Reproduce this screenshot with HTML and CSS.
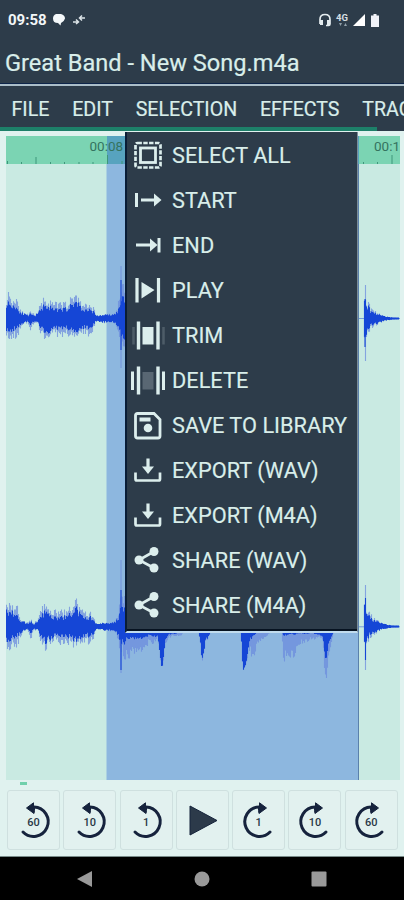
FILE: index.html
```
<!DOCTYPE html>
<html lang="en">
<head>
<meta charset="utf-8">
<title>Great Band - New Song.m4a</title>
<link rel="stylesheet" href="styles.css">
</head>
<body>
<svg class="defs" width="0" height="0" aria-hidden="true">
  <defs>
    <symbol id="export" viewBox="0 0 30 30"><path d="M2.500 16.500V23q0 1.500 1.500 1.500h21.500q1.500 0 1.500-1.500v-6.500" fill="none" stroke="currentColor" stroke-width="2.700"/><path d="M15 2.500v9" stroke="currentColor" stroke-width="3.200"/><path d="M9 10.500h12L15 18z" fill="currentColor"/></symbol>
    <symbol id="share" viewBox="0 0 30 30"><path d="M21 5.500L6 14l15 8" fill="none" stroke="currentColor" stroke-width="2.600"/><g fill="currentColor"><circle cx="21" cy="5.500" r="4.500"/><circle cx="6" cy="14" r="4.500"/><circle cx="21" cy="22" r="4.500"/></g></symbol>
    <symbol id="back" viewBox="0 0 40 44"><path d="M20 9A14.700 14.700 0 1 1 9 34" fill="none" stroke="currentColor" stroke-width="3" stroke-linecap="round"/><path d="M12.500 10L19.500 4.800v3.200l1 .5v4l-.5 3z" fill="currentColor" stroke="currentColor" stroke-linejoin="round"/></symbol>
    <symbol id="ahead" viewBox="0 0 40 44"><path d="M20 9A14.700 14.700 0 1 0 31 34" fill="none" stroke="currentColor" stroke-width="3" stroke-linecap="round"/><path d="M27.500 10L20.500 4.800v3.200l-1 .5v4l.5 3z" fill="currentColor" stroke="currentColor" stroke-linejoin="round"/></symbol>
  </defs>
</svg>
<div class="phone">
  <header class="status">
    <span class="clock">09:58</span>
    <svg class="st-chat" width="14" height="14" viewBox="0 0 14 14"><path d="M4 1h5q4 1 4 4.500Q12 9 9 10l-.5 2.500L6 10Q1 10 1 5.500 1 2 4 1z" fill="#f4f8fa"/></svg>
    <svg class="st-link" width="14" height="12" viewBox="0 0 14 12"><path d="M1 8h5M4 5.500L6.500 8 4 10M13 4H8M10 1.500L7.500 4 10 6.500" fill="none" stroke="#dce4e8" stroke-width="1.500"/></svg>
    <span class="spacer"></span>
    <svg width="14" height="14" viewBox="0 0 14 14"><path d="M2 11V6.500Q2 1.500 7 1.500t5 5V11q0 1.500-1.500 1.500H8" fill="none" stroke="#e4ecef" stroke-width="1.700"/><path d="M2 7h3v5H2zM9 7h3v5H9z" fill="#e4ecef"/></svg>
    <span class="net"><b>4G</b><svg width="8" height="4" viewBox="0 0 8 4"><path d="M0 0h3L1.500 3zM5 3h3L6.500 0z" fill="#91a0aa"/></svg></span>
    <svg width="12" height="12" viewBox="0 0 12 12"><path d="M0 12L12 0v12z" fill="#fff"/></svg>
    <svg class="st-bat" width="8" height="13" viewBox="0 0 8 13"><path d="M2.500 0h3v1.500H8V13H0V1.500h2.500z" fill="#f0f2f8"/></svg>
  </header>
  <h1>Great Band - New Song.m4a</h1>
  <nav class="tabs"><span>FILE</span><span>EDIT</span><span>SELECTION</span><span>EFFECTS</span><span>TRACK</span></nav>
  <div class="scroll"></div>
  <main class="editor">
    <div class="ruler">
      <span class="time first">00:08</span><span class="time last">00:1</span>
      <svg width="394" height="28" viewBox="6 136 394 28"><path d="M7.500 161v3M21.500 162v2M36 157v7M50.500 162v2M64.500 162v2M79 162v2M93 162v2M107.500 155v9M122 161v3M363.500 162v2M377.500 162v2M392 155v9" stroke="#3f967b"/></svg>
    </div>
    <svg class="waves" width="394" height="616" viewBox="6 164 394 616">
      <path d="M106.500 164h252v616h-252z" fill="#8db7df"/>
      <path d="M358.500 164v616" stroke="#5b81ac"/>
      <path d="M359 318.500h41M359 626.800h41" stroke="#789dda"/>
      <g id="tracks"></g>
    </svg>
    <i class="marker"></i>
  </main>
  <footer class="transport">
    <button><svg viewBox="0 0 40 44"><use href="#back"/></svg><b>60</b></button>
    <button><svg viewBox="0 0 40 44"><use href="#back"/></svg><b>10</b></button>
    <button><svg viewBox="0 0 40 44"><use href="#back"/></svg><b>1</b></button>
    <button><svg viewBox="0 0 40 44"><path d="M8 8l27 14.500L8 37z" fill="#2c3a4a" stroke="#15233a"/></svg></button>
    <button><svg viewBox="0 0 40 44"><use href="#ahead"/></svg><b>1</b></button>
    <button><svg viewBox="0 0 40 44"><use href="#ahead"/></svg><b>10</b></button>
    <button><svg viewBox="0 0 40 44"><use href="#ahead"/></svg><b>60</b></button>
  </footer>
  <div class="navbar">
    <svg viewBox="0 0 18 18"><path d="M16 1v16L1 9z"/></svg>
    <svg viewBox="0 0 18 18"><circle cx="9" cy="9" r="7.500"/></svg>
    <svg viewBox="0 0 18 18"><rect x="1.500" y="1.500" width="15" height="15" rx="1"/></svg>
  </div>
  <ul class="menu">
    <li><svg viewBox="0 0 36 30"><rect x="5.500" y="2" width="25" height="24.500" rx="2" fill="none" stroke="currentColor" stroke-width="2.700" stroke-dasharray="4.400 1.400"/><rect x="10.500" y="7" width="15" height="14.500" fill="none" stroke="currentColor" stroke-width="2.800"/></svg>SELECT ALL</li>
    <li><svg viewBox="0 0 36 30"><path d="M6.500 7v14M11 14h14" stroke="currentColor" stroke-width="3"/><path d="M24 7.500l7.500 6.500-7.500 6.500z" fill="currentColor"/></svg>START</li>
    <li><svg viewBox="0 0 36 30"><path d="M29 7v14.500M6 14h15" stroke="currentColor" stroke-width="3"/><path d="M20 7.500l7.500 6.500-7.500 6.500z" fill="currentColor"/></svg>END</li>
    <li><svg viewBox="0 0 36 30"><path d="M7 2v24.500M28.500 2v24.500" stroke="currentColor" stroke-width="3.200"/><path d="M11.500 6v16.500L24.500 14z" fill="currentColor"/></svg>PLAY</li>
    <li><svg viewBox="0 0 36 30"><path d="M8.500 .5v28M28 .5v28" stroke="currentColor" stroke-width="3.400"/><path d="M12.500 6h11v17.500h-11z" fill="currentColor"/><path d="M3.500 6v17.500M33.500 6v17.500" stroke="#4d5c68" stroke-width="2.500"/></svg>TRIM</li>
    <li><svg viewBox="0 0 36 30"><path d="M8.500 .5v28M28 .5v28" stroke="currentColor" stroke-width="3.400"/><path d="M12.500 6h11v17.500h-11z" fill="#596773"/><path d="M2.500 5.500v18.500M33.500 5.500v18.500" stroke="currentColor" stroke-width="3"/></svg>DELETE</li>
    <li><svg viewBox="0 0 36 30"><path d="M7.500 2.500H24l6 6V25q0 2-2 2H7.500q-2 0-2-2V4.500q0-2 2-2z" fill="none" stroke="currentColor" stroke-width="2.800"/><path d="M9.500 6.500h11v4h-11z" fill="currentColor"/><circle cx="18" cy="17" r="4.300" fill="currentColor"/></svg>SAVE TO LIBRARY</li>
    <li><svg viewBox="-3 0 36 30"><use href="#export" width="30" height="30"/></svg>EXPORT (WAV)</li>
    <li><svg viewBox="-3 0 36 30"><use href="#export" width="30" height="30"/></svg>EXPORT (M4A)</li>
    <li><svg viewBox="-3 0 36 30"><use href="#share" width="30" height="30"/></svg>SHARE (WAV)</li>
    <li><svg viewBox="-3 0 36 30"><use href="#share" width="30" height="30"/></svg>SHARE (M4A)</li>
  </ul>
</div>
<script src="waves.js"></script>
</body>
</html>
```

FILE: styles.css
```
* { box-sizing: border-box; }
body { margin: 0; font-family: Roboto, sans-serif; background: #2d3b49; }
svg { display: block; flex: none; }
.defs { position: absolute; }
.phone { position: relative; width: 404px; height: 900px; overflow: hidden; display: flex; flex-direction: column; background: #2d3c4a; color: #d9eeea; }
.status { height: 40px; display: flex; align-items: center; padding: 0 25px 0 8px; }
.clock { font-size: 15px; font-weight: 700; color: #f2f7f8; width: 44px; white-space: nowrap; }
.st-link { margin-left: 6px; }
.spacer { flex: 1; }
.net { width: 13px; margin: 0 4px 0 4px; height: 15px; font-size: 9.500px; line-height: 10px; color: #d5dfe3; }
.net svg { margin-left: 3px; }
.st-bat { margin-left: 6px; }
h1 { margin: 0; height: 44px; padding-left: 5px; font-size: 23.600px; line-height: 46px; font-weight: 400; white-space: nowrap; -webkit-text-stroke: .2px; }
.tabs { height: 43px; border-top: 2px solid #aabdc8; box-shadow: 0 -1px #0d2448; display: flex; gap: 22.800px; padding-left: 11.500px; font-size: 19.600px; line-height: 48px; white-space: nowrap; overflow: hidden; -webkit-text-stroke: .2px; }
.scroll { height: 4px; width: 377px; background: #1d8069; }
.editor { height: 655px; padding: 5px 4px 0 6px; background: #e0f2ef; }
.ruler { height: 28px; position: relative; overflow: hidden; background: linear-gradient(90deg, #7bd4b3 101px, #57a3bf 101px, #57a3bf 353px, #7bd4b3 353px); }
.time { position: absolute; top: 2px; font-size: 13.500px; line-height: 17px; color: #34735f; }
.time.first { left: 83.500px; }
.time.last { left: 368px; }
.ruler svg { position: absolute; left: 0; top: 0; }
.waves { background: #c9eae2; }
.marker { display: block; width: 7px; height: 3px; margin: 2px 0 0 14px; background: #70d0ac; }
.transport { height: 71px; padding: 4px 7px 7px; display: grid; grid-template-columns: repeat(7, 53px); gap: 3.300px; background: #e0f2ef; border-bottom: 1px solid #788b89; }
.transport button { position: relative; height: 60px; padding: 0; border: 1px solid #cfe0df; border-radius: 3px; background: #e2f1ef; display: grid; place-items: center; color: #16233d; font-family: inherit; }
.transport svg { width: 40px; height: 44px; }
.transport b { position: absolute; inset: 2px 0 0; line-height: 60px; text-align: center; font-size: 11px; font-weight: 500; color: #293746; }
.navbar { height: 43px; background: #000; display: flex; align-items: center; padding-left: 76px; gap: 99px; }
.navbar svg { width: 18px; height: 18px; fill: #999; }
.menu { position: absolute; left: 125px; top: 132px; width: 233px; height: 501px; margin: 0; padding: 1px 0 0; list-style: none; background: #2d3c4a; border-left: 2px solid #0a1d36; border-right: 1px solid #7b8c98; border-bottom: 2px solid #c1dcee; box-shadow: inset 0 -2px #071321; }
.menu li { height: 45px; display: flex; align-items: center; gap: 6px; padding-left: 3px; font-size: 21.750px; white-space: nowrap; -webkit-text-stroke: .15px; }
.menu svg { width: 36px; height: 30px; color: #dceeed; }
```

FILE: waves.js
```
// Envelope points: [x, peak above, peak below, core above, core below]
const intro = [
  [6, 20, 18, 16, 13], [9, 24, 23, 14, 14], [13, 17, 17, 13, 11], [17, 20, 20, 10, 9],
  [20, 10, 10, 6, 6], [24, 4, 5, 4, 4], [28, 4, 4, 2, 2], [31, 6, 12, 4, 6], [34, 4, 4, 2, 2],
  [38, 5, 4, 4, 3], [41, 16, 15, 9, 9], [45, 20, 22, 14, 15], [49, 15, 15, 11, 12],
  [54, 14, 13, 8, 9], [60, 14, 17, 8, 9], [68, 15, 16, 10, 10], [73, 20, 18, 13, 12],
  [76, 26, 18, 18, 14], [79, 17, 16, 13, 12], [84, 13, 13, 7, 8], [90, 13, 16, 9, 9],
  [94, 10, 10, 6, 6], [96, 2, 2, 2, 2], [104, 4, 4, 3, 3], [114, 4, 4, 3, 3],
  [117, 8, 8, 6, 6], [119, 18, 17, 9, 9], [120, 26, 22, 16, 14], [122, 28, 24, 18, 16], [125, 30, 24, 18, 18]
];
const hit = [
  [364, 20, 19, 19, 18], [366, 19, 17, 17, 15], [368, 14, 13, 11, 10], [371, 11, 11, 7, 7],
  [375, 7, 7, 5, 5], [380, 4, 4, 3, 3], [386, 2, 2, 1.5, 1.5], [392, 1, 1, .5, .5], [399, .5, .5, .5, .5]
];
// Peaks of the lower track below the menu: [x, light depth, dark depth] measured from its top
const tail = [
  [123, 36, 16], [126, 26, 8], [129, 27, 7], [132, 18, 6], [135, 27, 9], [138, 17, 6], [143, 20, 7],
  [148, 12, 4], [153, 11, 4], [158, 8, 6], [160, 24, 22], [162, 42, 38], [165, 18, 12], [168, 7, 3],
  [174, 4, 2], [180, 5, 1], [184, 0, 0], [199, 0, 0], [202, 30, 28], [206, 12, 10], [211, 0, 0],
  [241, 0, 0], [243, 39, 39], [246, 36, 32], [249, 22, 12], [253, 26, 4], [257, 16, 1], [262, 9, 0],
  [271, 0, 0], [282, 0, 0], [284, 40, 5], [287, 20, 3], [290, 28, 2], [295, 26, 3], [299, 12, 1],
  [306, 10, 2], [312, 8, 1], [318, 6, 3], [322, 6, 4], [326, 51, 29], [329, 20, 9], [334, 0, 0]
];

let seed = 11;
const noise = () => (seed = (seed * 16807) % 2147483647) / 2147483647;

function at(points, x, k) {
  for (let i = 1; i < points.length; i++) {
    const a = points[i - 1], b = points[i];
    if (x <= b[0]) return a[k] + (b[k] - a[k]) * (x - a[0]) / (b[0] - a[0]);
  }
  return 0;
}

const light = [], dark = [];
const bar = (list, x, top, bottom) => list.push(`M${x} ${top.toFixed(1)}V${bottom.toFixed(1)}`);

function draw(points, mid) {
  const end = points[points.length - 1][0];
  for (let x = points[0][0] + .5; x < end; x++) {
    const u = .66 + noise() * .56, d = .66 + noise() * .56;
    bar(light, x, mid - at(points, x, 1) * u, mid + at(points, x, 2) * d);
    bar(dark, x, mid - at(points, x, 3) * u - .5, mid + at(points, x, 4) * d + .5);
  }
}

[318.5, 626.5].forEach(mid => { draw(intro, mid); draw(hit, mid); });
bar(light, 365.5, 285, 361);
bar(dark, 365, 299, 347);
bar(light, 365.5, 585, 670);
bar(dark, 365.5, 598, 660);
bar(light, 121, 266, 368);
bar(dark, 121, 280, 350);
bar(light, 121, 560, 673);
bar(dark, 121, 590, 670);
for (let x = 123.5; x < 334; x++) {
  const n = .6 + noise() * .5;
  const l = at(tail, x, 1), d = at(tail, x, 2);
  if (l > 0) bar(light, x, 632, 632 + l * n);
  if (d > 0) bar(dark, x, 632, 632 + d * (d > 15 ? 1 : n));
}

document.getElementById('tracks').innerHTML =
  `<path d="${light.join('')}" stroke="#6c8cde" stroke-opacity=".75" stroke-width="1.1"/>` +
  `<path d="${dark.join('')}" stroke="#1546d6" stroke-width="1.1"/>`;
```
